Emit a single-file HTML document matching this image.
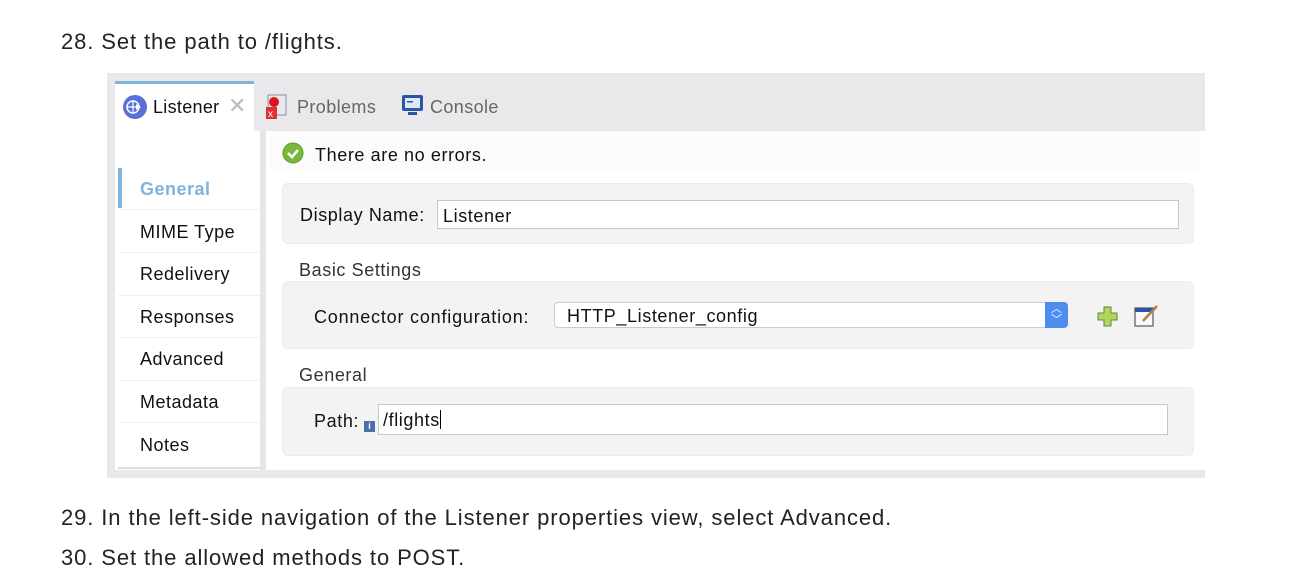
<!DOCTYPE html>
<html><head><style>
body{margin:0;width:1289px;height:577px;background:#fff;position:relative;font-family:"Liberation Sans",sans-serif;overflow:hidden}
.a{position:absolute}
.t{font-size:22px;color:#222;letter-spacing:0.9px;white-space:nowrap}
.ui{font-family:"Liberation Sans",sans-serif;font-size:18px;color:#111;letter-spacing:0.6px;white-space:nowrap}
.panel{position:absolute;background:#f3f3f3;border-radius:6px;border:1px solid #ececec}
.nav{position:absolute;left:140px;font-size:18px;color:#111;letter-spacing:0.5px}
.sep{position:absolute;left:118px;width:142px;height:1px;background:#f0f0f0}
.inp{position:absolute;background:#fff;border:1px solid #c8c8c8}
</style></head><body>
<div class="a t" style="left:61px;top:29px">28. Set the path to /flights.</div>
<div class="a t" style="left:61px;top:505px">29. In the left-side navigation of the Listener properties view, select Advanced.</div>
<div class="a t" style="left:61px;top:545px">30. Set the allowed methods to POST.</div>

<div class="a" style="left:107px;top:73px;width:1098px;height:405px;background:#e9e9eb"></div>
<div class="a" style="left:115px;top:131px;width:1090px;height:339px;background:#fff"></div>
<div class="a" style="left:115px;top:81px;width:139px;height:50px;background:#fff;border-top:3px solid #7fb4dd;box-sizing:border-box"></div>
<svg class="a" style="left:122px;top:94px" width="26" height="26"><circle cx="13" cy="13" r="12" fill="#5a6fd8"/><circle cx="11" cy="13" r="6" fill="none" stroke="#fff" stroke-width="1.5"/><path d="M11 7v12M5 13h12" stroke="#fff" stroke-width="1.2"/><path d="M14 10l5 3-5 3z" fill="#fff"/></svg>
<div class="a ui" style="left:153px;top:97px;letter-spacing:0.3px">Listener</div>
<div class="a" style="left:228px;top:93px;font-size:22px;color:#bbb">✕</div>
<svg class="a" style="left:265px;top:93px" width="26" height="28"><rect x="3" y="2" width="18" height="20" fill="#e8e8ee" stroke="#8890a8"/><circle cx="9" cy="9" r="5" fill="#d12"/><rect x="1" y="14" width="11" height="12" fill="#d33"/><text x="3" y="24" font-size="10" fill="#fff" font-family="Liberation Sans">x</text></svg>
<div class="a ui" style="left:297px;top:97px;color:#666;letter-spacing:0.4px">Problems</div>
<svg class="a" style="left:401px;top:94px" width="24" height="24"><rect x="1" y="1" width="21" height="16" rx="2" fill="#2b55a8"/><rect x="4" y="4" width="15" height="10" fill="#dfe8f8"/><rect x="6" y="7" width="6" height="1.5" fill="#2b55a8"/><rect x="7" y="18" width="9" height="3" fill="#2b55a8"/></svg>
<div class="a ui" style="left:430px;top:97px;color:#666;letter-spacing:0.4px">Console</div>

<div class="a" style="left:260px;top:131px;width:6px;height:339px;background:#e6e6e6"></div>
<div class="a" style="left:270px;top:131px;width:930px;height:40px;background:#fbfbfb"></div>
<div class="a" style="left:118px;top:168px;width:4px;height:40px;background:#7fb4dd"></div>
<div class="nav" style="top:179px;color:#7fb4dd;font-weight:bold">General</div>
<div class="sep" style="top:209px"></div>
<div class="nav" style="top:222px">MIME Type</div>
<div class="sep" style="top:252px"></div>
<div class="nav" style="top:264px">Redelivery</div>
<div class="sep" style="top:295px"></div>
<div class="nav" style="top:307px">Responses</div>
<div class="sep" style="top:337px"></div>
<div class="nav" style="top:349px">Advanced</div>
<div class="sep" style="top:380px"></div>
<div class="nav" style="top:392px">Metadata</div>
<div class="sep" style="top:422px"></div>
<div class="nav" style="top:435px">Notes</div>
<div class="a" style="left:118px;top:467px;width:142px;height:2px;background:#ddd"></div>

<svg class="a" style="left:282px;top:142px" width="22" height="22"><circle cx="11" cy="11" r="10" fill="#7ab83a" stroke="#5a9a2a"/><path d="M6 11l4 4 6-7" stroke="#fff" stroke-width="2.5" fill="none"/></svg>
<div class="a ui" style="left:315px;top:145px">There are no errors.</div>

<div class="panel" style="left:282px;top:183px;width:910px;height:59px"></div>
<div class="a ui" style="left:300px;top:205px">Display Name:</div>
<div class="inp" style="left:437px;top:200px;width:740px;height:27px"></div>
<div class="a ui" style="left:443px;top:206px">Listener</div>

<div class="a ui" style="left:299px;top:260px;color:#333">Basic Settings</div>
<div class="panel" style="left:282px;top:281px;width:910px;height:66px"></div>
<div class="a ui" style="left:314px;top:307px;letter-spacing:0.8px">Connector configuration:</div>
<div class="a" style="left:554px;top:302px;width:512px;height:26px;background:#fff;border:1px solid #ccc;border-radius:4px;box-sizing:border-box"></div>
<div class="a" style="left:1045px;top:302px;width:23px;height:26px;background:#4b8ef0;border-radius:0 4px 4px 0;color:#fff;font-size:11px;text-align:center;line-height:11px;padding-top:2px;box-sizing:border-box">︿<br>﹀</div>
<div class="a ui" style="left:567px;top:306px">HTTP_Listener_config</div>
<svg class="a" style="left:1097px;top:306px" width="22" height="22"><path d="M7 1h7v6h6v7h-6v6H7v-6H1V7h6z" fill="#b5d45a" stroke="#5e8a3a"/></svg>
<svg class="a" style="left:1133px;top:303px" width="28" height="26"><rect x="2" y="5" width="18" height="18" fill="#fafafa" stroke="#777" stroke-width="1.5"/><rect x="2" y="5" width="18" height="4" fill="#2b55a8"/><path d="M10 18l14-15" stroke="#b08040" stroke-width="2.5"/></svg>

<div class="a ui" style="left:299px;top:365px;color:#333">General</div>
<div class="panel" style="left:282px;top:387px;width:910px;height:67px"></div>
<div class="a ui" style="left:314px;top:411px">Path:</div>
<div class="a" style="left:364px;top:421px;width:11px;height:11px;background:#4a70a8;color:#fff;font-size:9px;font-weight:bold;text-align:center;line-height:11px">i</div>
<div class="inp" style="left:378px;top:404px;width:788px;height:29px"></div>
<div class="a ui" style="left:383px;top:410px">/flights<span style="display:inline-block;width:1px;height:19px;background:#000;vertical-align:-3px"></span></div>
</body></html>
